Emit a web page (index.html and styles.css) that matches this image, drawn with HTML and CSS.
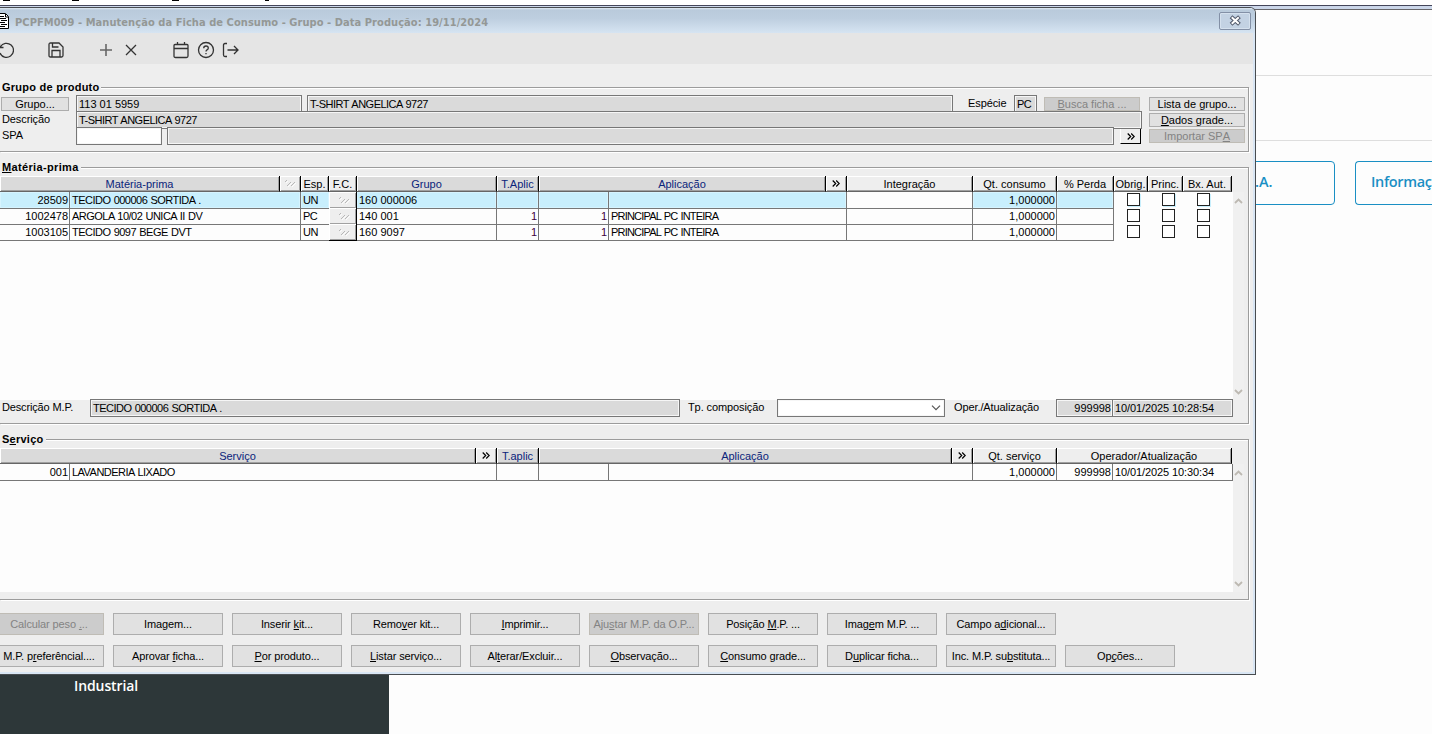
FILE: index.html
```html
<!DOCTYPE html>
<html lang="pt-BR">
<head>
  <meta charset="UTF-8" />
  <title>PCPFM009 - Manutenção da Ficha de Consumo</title>
  <link rel="stylesheet" href="styles.css">
</head>
<body>
  <div class="page">
    <div class="menu-edge"><i></i><i></i><i></i><i></i></div>
    <div class="frame-edge"></div>
    <div class="page-bar bar-top"></div>
    <div class="page-bar bar-tabs"></div>
    <div class="page-cards">
      <div class="page-card first"><span>.A.</span></div>
      <div class="page-card second"><span>Informaç</span></div>
    </div>
    <div class="sidebar">Industrial</div>
  </div>

  <div class="window">
    <div class="titlebar">
      <svg class="doc" width="10" height="16" viewBox="0 0 10 16"><path d="M-2 .5h7.500l3 3v12H-2z" fill="#fff" stroke="#000"/><path d="M0 3.500h4M0 5.500h6M1 7.500h6M0 9.500h5M1 11.500h6M0 13.500h5M5.500 1v3H8" stroke="#000" fill="none"/></svg>
      <span class="title">PCPFM009 - Manutenção da Ficha de Consumo - Grupo - Data Produção: 19/11/2024</span>
      <button class="close"><svg width="13" height="11" viewBox="0 0 13 11"><path d="M3.500 3l5.500 5M9 3L3.500 8" stroke="#50586a" stroke-width="4" stroke-linecap="square" fill="none"/><path d="M3.500 3l5.500 5M9 3L3.500 8" stroke="#fff" stroke-width="2" stroke-linecap="square" fill="none"/></svg></button>
    </div>

    <div class="toolbar">
      <svg class="i-undo" width="16" height="16" viewBox="0 0 16 16"><path d="M2.300 5A7 7 0 1 1 2 11M1.500 1.500V5.500H5.500"/></svg>
      <svg class="i-save" width="16" height="16" viewBox="0 0 16 16"><path d="M1 2.500Q1 1 2.500 1h8.500l4 4v8.500q0 1.500-1.500 1.500H2.500Q1 15 1 13.500zM4.500 1v4h6M4 15V8.500h8V15"/></svg>
      <svg class="i-add" width="14" height="14" viewBox="0 0 14 14"><path d="M7 1v12M1 7h12"/></svg>
      <svg class="i-del" width="14" height="14" viewBox="0 0 14 14"><path d="M2 2l10 10M12 2L2 12"/></svg>
      <svg class="i-cal" width="16" height="18" viewBox="0 0 16 18"><path d="M2 3.500h12q1 0 1 1V15q0 1.500-1.500 1.500h-11Q1 16.500 1 15V4.500q0-1 1-1zM1 7.500h14M4.500 1v3M11.500 1v3"/></svg>
      <svg class="i-help" width="18" height="18" viewBox="0 0 18 18"><circle cx="9" cy="9" r="7.500"/><path d="M6.700 7.200Q6.800 5 9 5t2.300 2q0 1.200-1.300 1.900-1 .6-1 1.600M9 12v1.300"/></svg>
      <svg class="i-exit" width="17" height="16" viewBox="0 0 17 16"><path d="M5 1.500H3Q1.500 1.500 1.500 3v10q0 1.500 1.500 1.500h2M5.500 8H16M12 4l4 4-4 4"/></svg>
    </div>

    <section class="group group-product">
      <h2>Grupo de produto</h2>
      <div class="form-row">
        <button class="btn small grupo">Grupo...</button>
        <div class="field f-code">113 01 5959</div>
        <div class="field caps f-name">T-SHIRT ANGELICA 9727</div>
        <label class="l-esp">Espécie</label>
        <div class="field caps f-esp">PC</div>
        <button class="btn small busca" disabled><u>B</u>usca ficha ...</button>
        <button class="btn small side">Lista de grupo...</button>
      </div>
      <div class="form-row">
        <label class="l-left">Descrição</label>
        <div class="field caps f-desc">T-SHIRT ANGELICA 9727</div>
        <button class="btn small side"><u>D</u>ados grade...</button>
      </div>
      <div class="form-row">
        <label class="l-left">SPA</label>
        <div class="field f-spa"></div>
        <div class="field f-spa-name"></div>
        <button class="more"><svg width="8" height="7" viewBox="0 0 8 7"><path d="M.7.500l3 3-3 3M4.200.500l3 3-3 3"/></svg></button>
        <button class="btn small side" disabled>Importar SP<u>A</u></button>
      </div>
    </section>

    <section class="group group-mp">
      <h2><u>M</u>atéria-prima</h2>
      <div class="grid-head mp-head">
        <div class="nav">Matéria-prima</div>
        <div><svg class="hatch" width="12" height="9" viewBox="0 0 12 9"><path class="lit" d="M2 4l2-2M4 8l4-4M8 8l4-4"/><path d="M1 3l2-2M3 7l4-4M7 7l4-4"/></svg></div>
        <div>Esp.</div>
        <div>F.C.</div>
        <div class="nav">Grupo</div>
        <div class="nav">T.Aplic</div>
        <div class="nav">Aplicação</div>
        <div><svg class="chev" width="8" height="7" viewBox="0 0 8 7"><path d="M.7.500l3 3-3 3M4.200.500l3 3-3 3"/></svg></div>
        <div>Integração</div>
        <div>Qt. consumo</div>
        <div>% Perda</div>
        <div>Obrig.</div>
        <div>Princ.</div>
        <div>Bx. Aut.</div>
      </div>
      <div class="grid-area mp-area">
        <div class="rows">
          <div class="mp-row selected">
            <div class="num">28509</div><div class="caps">TECIDO 000006 SORTIDA .</div><div class="esp">UN</div>
            <div class="fc"><svg class="hatch" width="12" height="9" viewBox="0 0 12 9"><path class="lit" d="M2 4l2-2M4 8l4-4M8 8l4-4"/><path d="M1 3l2-2M3 7l4-4M7 7l4-4"/></svg></div>
            <div>160 000006</div><div class="num"></div><div class="num"></div><div></div><div class="blank"></div><div class="num">1,000000</div><div></div>
            <div class="check"><i></i></div><div class="check"><i></i></div><div class="check"><i></i></div>
          </div>
          <div class="mp-row">
            <div class="num">1002478</div><div class="caps">ARGOLA 10/02 UNICA II DV</div><div class="esp">PC</div>
            <div class="fc"><svg class="hatch" width="12" height="9" viewBox="0 0 12 9"><path class="lit" d="M2 4l2-2M4 8l4-4M8 8l4-4"/><path d="M1 3l2-2M3 7l4-4M7 7l4-4"/></svg></div>
            <div>140 001</div><div class="num code">1</div><div class="num code">1</div><div class="tight">PRINCIPAL PC INTEIRA</div><div></div><div class="num">1,000000</div><div></div>
            <div class="check"><i></i></div><div class="check"><i></i></div><div class="check"><i></i></div>
          </div>
          <div class="mp-row">
            <div class="num">1003105</div><div class="caps">TECIDO 9097 BEGE DVT</div><div class="esp">UN</div>
            <div class="fc"><svg class="hatch" width="12" height="9" viewBox="0 0 12 9"><path class="lit" d="M2 4l2-2M4 8l4-4M8 8l4-4"/><path d="M1 3l2-2M3 7l4-4M7 7l4-4"/></svg></div>
            <div>160 9097</div><div class="num code">1</div><div class="num code">1</div><div class="tight">PRINCIPAL PC INTEIRA</div><div></div><div class="num">1,000000</div><div></div>
            <div class="check"><i></i></div><div class="check"><i></i></div><div class="check"><i></i></div>
          </div>
        </div>
        <div class="scroll">
          <svg width="9" height="6" viewBox="0 0 9 6"><path d="M1 5l3.500-3.500L8 5"/></svg>
          <svg width="9" height="6" viewBox="0 0 9 6"><path d="M1 1l3.500 3.500L8 1"/></svg>
        </div>
      </div>
      <div class="form-row detail">
        <label class="l-mp">Descrição M.P.</label>
        <div class="field caps f-mp">TECIDO 000006 SORTIDA .</div>
        <label class="l-tp">Tp. composição</label>
        <div class="field f-tp"><svg width="10" height="6" viewBox="0 0 10 6"><path d="M1 .7l4 4 4-4"/></svg></div>
        <label class="l-op">Oper./Atualização</label>
        <div class="field f-oper">999998</div>
        <div class="field f-date">10/01/2025 10:28:54</div>
      </div>
    </section>

    <section class="group group-sv">
      <h2>S<u>e</u>rviço</h2>
      <div class="grid-head sv-head">
        <div class="nav">Serviço</div>
        <div><svg class="chev" width="8" height="7" viewBox="0 0 8 7"><path d="M.7.500l3 3-3 3M4.200.500l3 3-3 3"/></svg></div>
        <div class="nav">T.aplic</div>
        <div class="nav">Aplicação</div>
        <div><svg class="chev" width="8" height="7" viewBox="0 0 8 7"><path d="M.7.500l3 3-3 3M4.200.500l3 3-3 3"/></svg></div>
        <div>Qt. serviço</div>
        <div>Operador/Atualização</div>
      </div>
      <div class="grid-area sv-area">
        <div class="rows">
          <div class="sv-row">
            <div class="num">001</div><div class="caps">LAVANDERIA LIXADO</div><div></div><div></div><div></div><div class="num">1,000000</div><div class="num">999998</div><div class="date">10/01/2025 10:30:34</div>
          </div>
        </div>
        <div class="scroll">
          <svg width="9" height="6" viewBox="0 0 9 6"><path d="M1 5l3.500-3.500L8 5"/></svg>
          <svg width="9" height="6" viewBox="0 0 9 6"><path d="M1 1l3.500 3.500L8 1"/></svg>
        </div>
      </div>
    </section>

    <div class="actions">
      <button class="btn" disabled>Calcular peso <u>.</u>..</button>
      <button class="btn">Ima<u>g</u>em...</button>
      <button class="btn">Inserir <u>k</u>it...</button>
      <button class="btn">Remo<u>v</u>er kit...</button>
      <button class="btn"><u>I</u>mprimir...</button>
      <button class="btn" disabled>Aju<u>s</u>tar M.P. da O.P...</button>
      <button class="btn">Posição <u>M</u>.P. ...</button>
      <button class="btn">Imag<u>e</u>m M.P. ...</button>
      <button class="btn">Campo a<u>d</u>icional...</button>
      <span></span>
      <button class="btn">M.P. p<u>r</u>eferêncial....</button>
      <button class="btn">Aprovar <u>f</u>icha...</button>
      <button class="btn"><u>P</u>or produto...</button>
      <button class="btn"><u>L</u>istar serviço...</button>
      <button class="btn">Al<u>t</u>erar/Excluir...</button>
      <button class="btn"><u>O</u>bservação...</button>
      <button class="btn"><u>C</u>onsumo grade...</button>
      <button class="btn">D<u>u</u>plicar ficha...</button>
      <button class="btn">Inc. M.P. su<u>b</u>stituta...</button>
      <button class="btn">Op<u>ç</u>ões...</button>
    </div>
  </div>
</body>
</html>
```
FILE: styles.css
```css
* {
  box-sizing: border-box;
}

body {
  margin: 0;
  height: 734px;
  overflow: hidden;
  position: relative;
  background: #fdfdfd;
  font-family: "Liberation Sans", Arial, sans-serif;
  font-size: 11px;
  color: #000;
}

svg {
  display: block;
  fill: none;
  flex: none;
}

button {
  font: inherit;
  padding: 0;
}

/* page behind the window */
.page {
  height: 734px;
  display: flex;
  flex-direction: column;
}

.menu-edge {
  height: 5px;
  display: flex;
  padding-left: 3px;
  background: #fff;
}

.menu-edge i {
  width: 7px;
  height: 1px;
  background: #000;
  margin-right: 62px;
}

.menu-edge i:nth-child(2) {
  margin-right: 93px;
}

.menu-edge i:nth-child(3) {
  margin-right: 86px;
}

.menu-edge i:nth-child(4) {
  width: 4px;
}

.frame-edge {
  height: 5px;
  border-top: 1px solid #45465a;
  border-bottom: 1px solid #66666a;
  background: #ccd7ea;
}

.page-bar {
  border-bottom: 1px solid #dedede;
}

.bar-top {
  height: 66px;
}

.bar-tabs {
  height: 65px;
}

.page-cards {
  display: flex;
  gap: 20px;
  padding: 20px 0 0 1155px;
}

.page-card {
  flex: none;
  width: 180px;
  height: 44px;
  border: 1px solid #1a8fc4;
  border-radius: 4px;
  color: #1a8fc4;
  font: 600 14.500px/39px "Open Sans", sans-serif;
}

.page-card.first {
  padding-left: 99px;
}

.page-card.second {
  width: 77px;
  padding-left: 15px;
  border-right: 0;
  border-radius: 4px 0 0 4px;
  letter-spacing: -0.350px;
  overflow: hidden;
}

.sidebar {
  width: 389px;
  height: 70px;
  margin-top: auto;
  padding: 12px 0 0 74px;
  background: #2d3739;
  color: #fff;
  font: 600 14px/20px "Open Sans", sans-serif;
  letter-spacing: -0.1px;
}

/* window */
.window {
  position: absolute;
  left: 0;
  top: 7px;
  width: 1256px;
  height: 668px;
  background: #eee;
  border: solid #484c50;
  border-width: 1px 1px 1px 0;
  border-radius: 0 6px 0 0;
  box-shadow: inset -2px -2px 0 #d9e6f4;
  overflow: hidden;
}

.titlebar {
  height: 25px;
  display: flex;
  align-items: center;
  padding-right: 4px;
  background: linear-gradient(#e0eaf4 0, #b9cadb 2px, #bdcedf 40%, #d6e4f2);
}

.doc {
  margin-top: 1px;
}

.title {
  margin-left: 5px;
  margin-top: 4px;
  font: bold 11px/14px "DejaVu Sans Condensed", "DejaVu Sans", sans-serif;
  font-stretch: condensed;
  letter-spacing: 0.060px;
  color: #949896;
  white-space: nowrap;
}

.close {
  width: 32px;
  height: 18px;
  margin-left: auto;
  display: flex;
  align-items: center;
  justify-content: center;
  background: #c3d2e3;
  border: 1px solid #8390a6;
  border-radius: 2px;
  box-shadow: inset 0 0 0 1px #d5e1ee;
}

.toolbar {
  height: 31px;
  display: flex;
  align-items: center;
  background: #e5e5e5;
  margin-right: 2px;
  padding-top: 3px;
}

.toolbar svg {
  stroke: #333;
  stroke-width: 1.300;
}

.i-undo { margin-left: -2px; }
.i-save { margin-left: 34px; }
.toolbar .i-add { margin-left: 35px; stroke: #666; stroke-width: 1.600; }
.i-del { margin-left: 11px; }
.i-cal { margin-left: 35px; }
.i-help { margin-left: 8px; }
.i-exit { margin-left: 7px; }

.group {
  width: 1249px;
  border: solid #9c9c9c;
  border-width: 1px 1px 1px 0;
  box-shadow: 1px 1px 0 #fff, inset 0 1px 0 #fff;
}

.group h2 {
  width: max-content;
  height: 14px;
  margin: -8px 0 0;
  padding: 0 2px;
  background: #eee;
  font: bold 11px/14px "Liberation Sans", Arial, sans-serif;
  letter-spacing: 0.250px;
}

.group-product {
  height: 65px;
  margin-top: 23px;
}

.group-mp {
  height: 257px;
  margin-top: 15px;
}

.group-mp h2 {
  letter-spacing: 0.350px;
}

.group-sv {
  height: 161px;
  margin-top: 15px;
}

/* form */
.form-row {
  height: 16px;
  display: flex;
}

.group-product .form-row:nth-of-type(1) {
  margin-top: 1px;
}

.form-row label {
  line-height: 16px;
  white-space: nowrap;
  letter-spacing: -0.1px;
}

.form-row .l-mp {
  letter-spacing: -0.150px;
}

.l-left {
  width: 76px;
  padding-left: 2px;
}

.field {
  height: 18px;
  border: 1px solid #777;
  background: #dadada;
  box-shadow: inset 0 0 0 1px #f6f6f6;
  padding-left: 2px;
  line-height: 17px;
  white-space: nowrap;
  z-index: 0;
  flex: none;
}

.caps {
  letter-spacing: -0.520px;
  word-spacing: 0.700px;
}

.f-code { width: 226px; margin-left: 7px; }
.f-name { width: 646px; margin-left: 5px; }
.l-esp { width: 61px; padding-left: 15px; }
.f-esp { width: 23px; }
.f-desc { width: 1066px; }
.f-spa { width: 86px; background: #fff; }
.f-spa-name { width: 947px; margin-left: 5px; }

.more {
  width: 21px;
  height: 16px;
  margin: 1px 0 0 6px;
  display: flex;
  align-items: center;
  justify-content: center;
  background: #eee;
  border: solid #fff;
  border-width: 1px;
  border-right-color: #000;
  border-bottom-color: #000;
}

.more svg,
.chev {
  stroke: #000;
  stroke-width: 1.200;
}

.btn {
  width: 110px;
  height: 22px;
  border: 1px solid #adadad;
  background: #e1e1e1;
  color: #000;
  letter-spacing: -0.120px;
  display: flex;
  align-items: center;
  justify-content: center;
  white-space: pre;
}

.btn:disabled {
  background: #ccc;
  border-color: #bfbcb5;
  color: #838383;
}

.btn.small {
  height: 14px;
  margin-top: 2px;
  letter-spacing: 0;
}

.btn.grupo { width: 68px; margin-left: 1px; }
.btn.busca { width: 96px; margin-left: 7px; }
.btn.side { width: 96px; margin-left: 9px; }
.btn.small.side { flex: none; }
.f-desc + .btn.side { margin-left: 7px; }
.more + .btn.side { margin-left: 8px; }

/* grids */
.grid-head {
  display: grid;
  width: 1232px;
  height: 16px;
  margin-top: 2px;
}

.mp-head {
  grid-template-columns: 280px 21px 28px 28px 140px 42px 287px 21px 126px 84px 57px 34px 35px 49px;
}

.sv-head {
  grid-template-columns: 476px 21px 42px 413px 21px 84px 175px;
}

.grid-head div {
  display: flex;
  align-items: center;
  justify-content: center;
  background: #eee;
  border-right: 1px solid #000;
  border-bottom: 1px solid #666;
  box-shadow: inset 1px 1px 0 #fff, inset -1px -1px 0 #a0a0a0;
  white-space: nowrap;
  line-height: 14px;
}

.grid-head .nav {
  background: #dadada;
  color: #0a247a;
}

.hatch {
  stroke: #a8a8a8;
  stroke-width: .8;
}

.hatch .lit {
  stroke: #fff;
}

.grid-area {
  display: flex;
  width: 1244px;
  background: #fdfdfd;
}

.mp-area {
  height: 208px;
}

.sv-area {
  height: 128px;
}

.rows {
  width: 1233px;
}

.mp-row,
.sv-row {
  display: grid;
  height: 16px;
}

.mp-row {
  grid-template-columns: 70px 231px 28px 28px 140px 42px 70px 238px 126px 84px 57px 35px 35px 35px;
}

.sv-row {
  height: 17px;
  grid-template-columns: 70px 427px 42px 70px 364px 84px 56px 120px;
}

.mp-row > div,
.sv-row > div {
  border: solid #777;
  border-width: 0 1px 1px 0;
  padding-left: 2px;
  line-height: 16px;
  white-space: nowrap;
}

.mp-row .num,
.sv-row .num {
  text-align: right;
  padding-right: 1px;
}

.mp-row .code {
  color: #400040;
}

.tight {
  letter-spacing: -0.800px;
  word-spacing: 0.800px;
}

.mp-row.selected > div {
  background: #c8effd;
  box-shadow: inset 0 0 0 1px #d6f4ff;
}

.mp-row.selected > .blank {
  background: #fdfdfd;
  box-shadow: none;
}

.mp-row > .esp {
  border-right: 0;
  letter-spacing: -0.500px;
}

.mp-row > .fc,
.mp-row.selected > .fc {
  background: #eee;
  border-color: #000;
  box-shadow: inset 1px 1px 0 #fff, inset -1px -1px 0 #a0a0a0;
  display: flex;
  align-items: center;
  justify-content: center;
}

.mp-row > .check,
.mp-row.selected > .check {
  border: 0;
  background: none;
  box-shadow: none;
  padding: 1px 0 0 13px;
}

.check i {
  display: block;
  width: 13px;
  height: 13px;
  border: 1px solid #222;
  background: #fff;
}

.selected .check i {
  box-shadow: 1px 1px 0 #c8effd;
}

.scroll {
  width: 11px;
  background: #f0f0f0;
  display: flex;
  flex-direction: column;
  justify-content: space-between;
  align-items: center;
  padding: 6px 0 5px;
}

.scroll svg {
  stroke: #bdb9b2;
  stroke-width: 1.800;
}

.detail {
  margin-top: -1px;
}

.detail label {
  line-height: 17px;
}

.l-mp { width: 90px; padding-left: 2px; }
.f-mp { width: 590px; }
.l-tp { width: 97px; padding-left: 8px; }
.f-tp {
  width: 168px;
  background: #fff;
  display: flex;
  align-items: center;
  justify-content: flex-end;
  padding-right: 3px;
}
.f-tp svg { stroke: #555; stroke-width: 1.200; }
.l-op { width: 111px; padding-left: 9px; }
.f-oper { width: 57px; text-align: right; padding-right: 1px; }
.f-date { width: 121px; margin-left: -1px; }

.f-date,
.date {
  letter-spacing: -0.1px;
}

/* bottom buttons */
.actions {
  display: grid;
  grid-template-columns: repeat(10, 110px);
  gap: 10px 9px;
  margin: 13px 0 0 -6px;
}
```
